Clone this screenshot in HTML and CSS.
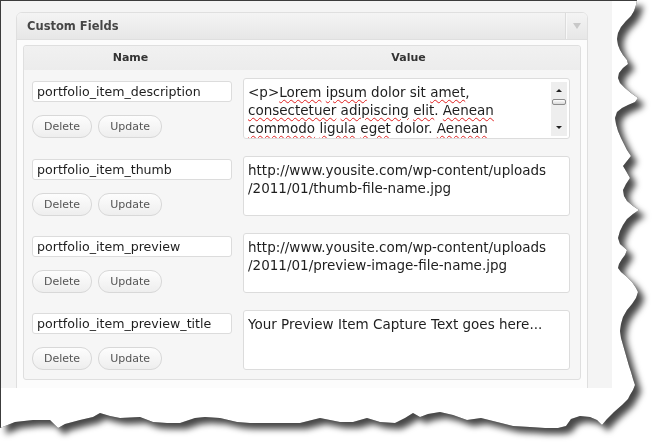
FILE: index.html
```html
<!DOCTYPE html>
<html lang="en">
<head>
<meta charset="utf-8">
<title>Custom Fields</title>
<link rel="stylesheet" href="styles.css">
</head>
<body>
<div class="sheet-wrap">
  <div class="sheet">
    <div class="screen">
      <div class="postbox">
        <div class="postbox-head">
          <h3 class="postbox-title">Custom Fields</h3>
          <div class="toggle"><span class="toggle-arrow"></span></div>
        </div>
        <div class="postbox-body">
          <div class="cf-table">
            <div class="cf-head">
              <div class="cf-th">Name</div>
              <div class="cf-th">Value</div>
            </div>
            <div class="cf-rows">
              <div class="cf-row">
                <div class="cf-key">
                  <input class="field" type="text" value="portfolio_item_description">
                  <div class="actions"><button class="btn">Delete</button><button class="btn">Update</button></div>
                </div>
                <div class="cf-val">
                  <div class="textarea has-scroll">
                    <div class="line">&lt;p&gt;<span class="sp">Lorem</span> <span class="sp">ipsum</span> dolor sit <span class="sp">amet</span>,</div>
                    <div class="line"><span class="sp">consectetuer</span> <span class="sp">adipiscing</span> <span class="sp">elit</span>. <span class="sp">Aenean</span></div>
                    <div class="line"><span class="sp">commodo</span> <span class="sp">ligula</span> <span class="sp">eget</span> dolor. <span class="sp">Aenean</span></div>
                    <div class="scrollbar">
                      <span class="sb-up"></span>
                      <span class="sb-thumb"></span>
                      <span class="sb-down"></span>
                    </div>
                  </div>
                </div>
              </div>
              <div class="cf-row">
                <div class="cf-key">
                  <input class="field" type="text" value="portfolio_item_thumb">
                  <div class="actions"><button class="btn">Delete</button><button class="btn">Update</button></div>
                </div>
                <div class="cf-val">
                  <div class="textarea">
                    <div class="line">http://www.yousite.com/wp-content/uploads</div>
                    <div class="line">/2011/01/thumb-file-name.jpg</div>
                  </div>
                </div>
              </div>
              <div class="cf-row">
                <div class="cf-key">
                  <input class="field" type="text" value="portfolio_item_preview">
                  <div class="actions"><button class="btn">Delete</button><button class="btn">Update</button></div>
                </div>
                <div class="cf-val">
                  <div class="textarea">
                    <div class="line">http://www.yousite.com/wp-content/uploads</div>
                    <div class="line">/2011/01/preview-image-file-name.jpg</div>
                  </div>
                </div>
              </div>
              <div class="cf-row">
                <div class="cf-key">
                  <input class="field" type="text" value="portfolio_item_preview_title">
                  <div class="actions"><button class="btn">Delete</button><button class="btn">Update</button></div>
                </div>
                <div class="cf-val">
                  <div class="textarea">
                    <div class="line">Your Preview Item Capture Text goes here...</div>
                  </div>
                </div>
              </div>
            </div>
          </div>
        </div>
      </div>
    </div>
  </div>
</div>
</body>
</html>
```
FILE: styles.css
```css
html, body {
  margin: 0;
  padding: 0;
  background: #ffffff;
}

body {
  font-family: "DejaVu Sans", Verdana, sans-serif;
  width: 653px;
  height: 444px;
  overflow: hidden;
}

.sheet-wrap {
  width: 653px;
  height: 444px;
  filter: drop-shadow(0 0 0.6px rgba(0, 0, 0, 0.8)) drop-shadow(6px 6px 3px rgba(0, 0, 0, 0.72));
}

.sheet {
  width: 653px;
  height: 444px;
  box-sizing: border-box;
  background: #ffffff;
  border-top: 1px solid #3c3c3c;
  border-left: 1px solid #3c3c3c;
  clip-path: polygon(
    0 0, 637px 0, 636px 5px, 634px 11px, 631px 16px, 626px 21px, 621px 27px, 618px 33px,
    617px 39px, 618px 45px, 620px 50px, 623px 55px, 627px 60px, 628px 64px, 623px 68px,
    619px 73px, 618px 78px, 620px 83px, 625px 88px, 631px 93px, 638px 98px, 635px 102px,
    628px 105px, 622px 108px, 617px 112px, 615px 118px, 616px 124px, 618px 131px,
    621px 138px, 624px 144px, 627px 150px, 631px 156px, 627px 161px, 623px 166px,
    626px 171px, 630px 178px, 626px 184px, 623px 190px, 624px 196px, 627px 201px,
    633px 206px, 639px 210px, 633px 214px, 627px 219px, 623px 225px, 620px 231px,
    618px 238px, 620px 244px, 627px 250px, 625px 255px, 622px 259px, 619px 264px,
    618px 268px, 621px 272px, 627px 277px, 632px 282px, 636px 288px, 638px 292px,
    636px 298px, 632px 304px, 627px 310px, 623px 317px, 621px 324px, 620px 331px,
    621px 338px, 623px 345px, 625px 352px, 627px 359px, 629px 366px, 631px 372px,
    633px 379px, 635px 385px, 633px 390px, 630px 395px, 628px 399px, 622px 405px,
    614px 412px, 607px 419px, 602px 425px, 597px 420px, 590px 417px, 580px 416px,
    571px 419px, 566px 426px, 558px 428px, 545px 428px, 530px 427px, 513px 426px,
    497px 422px, 481px 418px, 467px 420px, 453px 415px, 440px 412px, 428px 414px,
    420px 417px, 413px 413px, 405px 418px, 395px 423px, 380px 422px, 367px 418px,
    353px 422px, 340px 422px, 320px 418px, 300px 423px, 285px 423px, 270px 423px,
    250px 423px, 237px 422px, 220px 418px, 205px 417px, 195px 418px, 180px 423px,
    167px 423px, 153px 422px, 140px 417px, 120px 418px, 110px 416px, 100px 413px,
    93px 417px, 80px 420px, 65px 424px, 58px 428px, 50px 420px, 33px 420px,
    15px 422px, 5px 426px, 0 428px
  );
}

.screen {
  width: 611px;
  height: 387px;
  box-sizing: border-box;
  padding: 11px 0 0 15px;
  background: #f4f4f4;
  overflow: hidden;
}

.postbox {
  width: 572px;
  min-height: 420px;
  box-sizing: border-box;
  border: 1px solid #dfdfdf;
  border-radius: 6px 6px 0 0;
  background: #fcfcfc;
  overflow: hidden;
}

.postbox-head {
  display: flex;
  height: 26px;
  border-bottom: 1px solid #dfdfdf;
  background: linear-gradient(#f4f4f4, #e7e7e7);
}

.postbox-title {
  flex: 1;
  margin: 0;
  padding-left: 10px;
  font-size: 11.5px;
  font-weight: bold;
  line-height: 27px;
  color: #464646;
}

.toggle {
  width: 21px;
  display: flex;
  align-items: center;
  justify-content: center;
  border-left: 1px solid #dcdcdc;
  box-shadow: inset 1px 0 #f8f8f8;
}

.toggle-arrow {
  width: 0;
  height: 0;
  border-left: 4px solid transparent;
  border-right: 4px solid transparent;
  border-top: 6px solid #c8c8c8;
  margin-left: 1px;
}

.postbox-body {
  padding: 5px 6px 0 6px;
}

.cf-table {
  border: 1px solid #dfdfdf;
  border-radius: 3px;
  background: #f6f6f6;
}

.cf-head {
  display: grid;
  grid-template-columns: 213px 1fr;
  height: 24px;
  border-radius: 3px 3px 0 0;
  background: linear-gradient(#f1f1f1, #ececec);
}

.cf-th {
  text-align: center;
  font-size: 11px;
  font-weight: bold;
  line-height: 24px;
  color: #333333;
}

.cf-rows {
  display: flex;
  flex-direction: column;
  gap: 17px;
  padding: 8px 0 9px;
}

.cf-row {
  display: grid;
  grid-template-columns: 213px 1fr;
}

.cf-key {
  padding: 3px 0 0 8px;
}

.field {
  display: block;
  width: 200px;
  height: 21px;
  box-sizing: border-box;
  margin: 0;
  padding: 0 4px;
  border: 1px solid #dcdcdc;
  border-radius: 3px;
  background: #ffffff;
  font-family: "DejaVu Sans", Verdana, sans-serif;
  font-size: 12.6px;
  color: #1e1e1e;
  outline: none;
}

.actions {
  display: flex;
  gap: 6px;
  margin-top: 13px;
}

.btn {
  height: 23px;
  margin: 0;
  padding: 0 11px;
  border: 1px solid #d8d8d8;
  border-radius: 11px;
  background: linear-gradient(#fdfdfd, #eeeeee);
  font-family: "DejaVu Sans", Verdana, sans-serif;
  font-size: 11px;
  color: #555555;
  line-height: 21px;
}

.cf-val {
  padding: 0 10px 0 6px;
}

.textarea {
  position: relative;
  height: 60px;
  box-sizing: border-box;
  padding: 4px;
  border: 1px solid #dcdcdc;
  border-radius: 3px;
  background: #ffffff;
  font-size: 13.5px;
  line-height: 18px;
  color: #1e1e1e;
  overflow: hidden;
}

.has-scroll {
  height: 61px;
}

.line {
  white-space: nowrap;
}

.sp {
  text-decoration: underline wavy #e02020;
  text-decoration-thickness: 1px;
  text-underline-offset: 2px;
}

.scrollbar {
  position: absolute;
  top: 3px;
  right: 2px;
  bottom: 2px;
  width: 16px;
  display: flex;
  flex-direction: column;
  align-items: center;
  background: #eeeeee;
  box-sizing: border-box;
  padding-top: 7px;
}

.sb-up {
  width: 0;
  height: 0;
  border-left: 3px solid transparent;
  border-right: 3px solid transparent;
  border-bottom: 3px solid #222222;
}

.sb-thumb {
  width: 14px;
  height: 6px;
  box-sizing: border-box;
  margin-top: 7px;
  border: 1px solid #8c8c8c;
  border-radius: 2px;
  background: linear-gradient(#ffffff, #d8d8d8);
}

.sb-down {
  width: 0;
  height: 0;
  margin-top: auto;
  margin-bottom: 7px;
  border-left: 3px solid transparent;
  border-right: 3px solid transparent;
  border-top: 3px solid #222222;
}
```
